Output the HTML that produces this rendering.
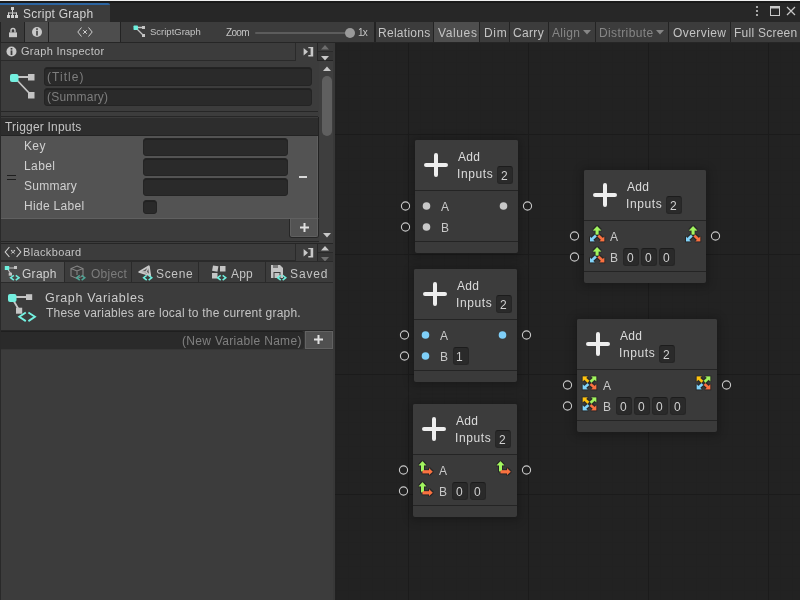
<!DOCTYPE html>
<html><head><meta charset="utf-8"><style>
html,body{margin:0;padding:0;width:800px;height:600px;overflow:hidden;background:#212121;font-family:"Liberation Sans", sans-serif;}
body>div,body>svg{position:absolute;}
.t{white-space:nowrap;will-change:transform;}
#canvas{background-color:#222222;
background-image:linear-gradient(to right,#1b1b1b 1px,transparent 1px),linear-gradient(to bottom,#1b1b1b 1px,transparent 1px),linear-gradient(to right,#212121 1px,transparent 1px),linear-gradient(to bottom,#212121 1px,transparent 1px);
background-size:120px 120px,120px 120px,12px 12px,12px 12px;
background-position:73px 0,0 91px,1px 0,0 7px;}
</style></head><body>
<div style="left:0px;top:0px;width:800px;height:22px;background:#272727;"></div>
<div style="left:0px;top:0px;width:800px;height:1px;background:#f0f0f0;"></div>
<div style="left:0px;top:1px;width:800px;height:2px;background:#1a1a1a;"></div>
<div style="left:0px;top:3px;width:110px;height:2px;background:#2c64a0;border-top-right-radius:2px;"></div>
<div style="left:0px;top:5px;width:110px;height:17px;background:#3c3c3c;"></div>
<svg style="position:absolute;left:7px;top:7px;" width="11" height="11" viewBox="0 0 11 11"><g fill="#d0d0d0"><rect x="4" y="0" width="3" height="3"/><rect x="5" y="3" width="1" height="2.5"/><rect x="1" y="5.5" width="9" height="1"/><rect x="1" y="5.5" width="1" height="2.5"/><rect x="9" y="5.5" width="1" height="2.5"/><rect x="5" y="5.5" width="1" height="2.5"/><rect x="0" y="8" width="3" height="3"/><rect x="4" y="8" width="3" height="3"/><rect x="8" y="8" width="3" height="3"/></g></svg>
<div class="t" style="left:23px;top:8.00px;font-size:12px;line-height:13.40px;color:#d2d2d2;letter-spacing:0.245px;">Script Graph</div>
<svg style="position:absolute;left:755px;top:5px;" width="4" height="12" viewBox="0 0 4 12"><g fill="#c8c8c8"><circle cx="2" cy="2" r="1.1"/><circle cx="2" cy="6" r="1.1"/><circle cx="2" cy="10" r="1.1"/></g></svg>
<svg style="position:absolute;left:769px;top:5px;" width="12" height="12" viewBox="0 0 12 12"><rect x="1.5" y="1.5" width="9" height="9" fill="none" stroke="#c8c8c8" stroke-width="1"/><rect x="1" y="1" width="10" height="2.5" fill="#c8c8c8"/></svg>
<svg style="position:absolute;left:786px;top:6px;" width="10" height="10" viewBox="0 0 10 10"><path d="M1 1 L9 9 M9 1 L1 9" stroke="#c8c8c8" stroke-width="1.2"/></svg>
<div style="left:0px;top:22px;width:800px;height:20px;background:#3c3c3c;"></div>
<div style="left:0px;top:42px;width:800px;height:1px;background:#262626;"></div>
<div style="left:0px;top:22px;width:1px;height:20px;background:#232323;"></div>
<div style="left:24px;top:22px;width:1px;height:20px;background:#232323;"></div>
<div style="left:25px;top:22px;width:23px;height:20px;background:#4d4d4d;"></div>
<div style="left:48px;top:22px;width:1px;height:20px;background:#232323;"></div>
<div style="left:49px;top:22px;width:71px;height:20px;background:#4d4d4d;"></div>
<div style="left:120px;top:22px;width:1px;height:20px;background:#232323;"></div>
<svg style="position:absolute;left:8px;top:26px;" width="10" height="12" viewBox="0 0 10 12"><path d="M3 6.5 V4.5 A2 2 0 0 1 7 4.5 V6.5" fill="none" stroke="#c8c8c8" stroke-width="1.4"/><rect x="1" y="6.4" width="8" height="4.8" fill="#c8c8c8"/></svg>
<svg style="position:absolute;left:31px;top:26px;" width="12" height="12" viewBox="0 0 12 12"><circle cx="6" cy="6" r="5" fill="#c8c8c8"/><rect x="5.1" y="2.3" width="1.8" height="1.6" fill="#4d4d4d"/><rect x="5.1" y="4.8" width="1.8" height="4.8" fill="#4d4d4d"/></svg>
<svg style="position:absolute;left:77px;top:27px;" width="16" height="10" viewBox="0 0 16 10"><path d="M4.5 0.5 L0.8 5 L4.5 9.5 M11.5 0.5 L15.2 5 L11.5 9.5 M6.2 3.2 L9.8 6.8 M9.8 3.2 L6.2 6.8" fill="none" stroke="#d0d0d0" stroke-width="1"/></svg>
<svg style="position:absolute;left:133px;top:25px;" width="13" height="13" viewBox="0 0 13 13"><path d="M2.5 2.5 L10.5 2.5 M2.5 2.5 L10.5 10.5" stroke="#c4c4c4" stroke-width="1.3"/><rect x="0.5" y="0.5" width="4.5" height="4.5" rx="0.8" fill="#6ef0de"/><rect x="9" y="1" width="3" height="3" fill="#c4c4c4"/><rect x="9" y="9" width="3" height="3" fill="#c4c4c4"/></svg>
<div class="t" style="left:150px;top:27.00px;font-size:9.5px;line-height:10.61px;color:#c4c4c4;">ScriptGraph</div>
<div class="t" style="left:226px;top:27.00px;font-size:10px;line-height:11.17px;color:#c4c4c4;letter-spacing:-0.667px;">Zoom</div>
<div style="left:255px;top:32px;width:95px;height:2px;background:#5c5c5c;border-radius:1px;"></div>
<div style="left:345px;top:28px;width:10px;height:10px;border-radius:50%;background:#9a9a9a;"></div>
<div class="t" style="left:358px;top:27.00px;font-size:10px;line-height:11.17px;color:#c4c4c4;letter-spacing:-0.750px;">1x</div>
<div style="left:374px;top:22px;width:2px;height:20px;background:#232323;"></div>
<div style="left:376px;top:22px;width:57px;height:20px;background:#3c3c3c;"></div>
<div style="left:433px;top:22px;width:1px;height:20px;background:#232323;"></div>
<div class="t" style="left:378px;top:27.00px;font-size:12px;line-height:13.40px;color:#c4c4c4;letter-spacing:0.275px;">Relations</div>
<div style="left:434px;top:22px;width:45px;height:20px;background:#4e4e4e;"></div>
<div style="left:479px;top:22px;width:1px;height:20px;background:#232323;"></div>
<div class="t" style="left:438px;top:27.00px;font-size:12px;line-height:13.40px;color:#c4c4c4;letter-spacing:0.620px;">Values</div>
<div style="left:480px;top:22px;width:29px;height:20px;background:#3c3c3c;"></div>
<div style="left:509px;top:22px;width:1px;height:20px;background:#232323;"></div>
<div class="t" style="left:484px;top:27.00px;font-size:12px;line-height:13.40px;color:#c4c4c4;letter-spacing:0.650px;">Dim</div>
<div style="left:510px;top:22px;width:38px;height:20px;background:#3c3c3c;"></div>
<div style="left:548px;top:22px;width:1px;height:20px;background:#232323;"></div>
<div class="t" style="left:513px;top:27.00px;font-size:12px;line-height:13.40px;color:#c4c4c4;letter-spacing:0.325px;">Carry</div>
<div style="left:549px;top:22px;width:46px;height:20px;background:#3c3c3c;"></div>
<div style="left:595px;top:22px;width:1px;height:20px;background:#232323;"></div>
<div class="t" style="left:552px;top:27.00px;font-size:12px;line-height:13.40px;color:#868686;letter-spacing:0.300px;">Align</div>
<div style="left:596px;top:22px;width:72px;height:20px;background:#3c3c3c;"></div>
<div style="left:668px;top:22px;width:1px;height:20px;background:#232323;"></div>
<div class="t" style="left:599px;top:27.00px;font-size:12px;line-height:13.40px;color:#868686;letter-spacing:0.389px;">Distribute</div>
<div style="left:669px;top:22px;width:61px;height:20px;background:#3c3c3c;"></div>
<div style="left:730px;top:22px;width:1px;height:20px;background:#232323;"></div>
<div class="t" style="left:673px;top:27.00px;font-size:12px;line-height:13.40px;color:#c4c4c4;letter-spacing:0.429px;">Overview</div>
<div style="left:731px;top:22px;width:69px;height:20px;background:#3c3c3c;"></div>
<div style="left:800px;top:22px;width:1px;height:20px;background:#232323;"></div>
<div class="t" style="left:734px;top:27.00px;font-size:12px;line-height:13.40px;color:#c4c4c4;letter-spacing:0.250px;">Full Screen</div>
<svg style="position:absolute;left:583px;top:30px;" width="8" height="5" viewBox="0 0 8 5"><path d="M0 0 H8 L4 4.5 Z" fill="#868686"/></svg>
<svg style="position:absolute;left:656px;top:30px;" width="8" height="5" viewBox="0 0 8 5"><path d="M0 0 H8 L4 4.5 Z" fill="#868686"/></svg>
<div id="canvas" style="left:335px;top:43px;width:465px;height:557px;"></div>
<div style="left:0px;top:43px;width:335px;height:557px;background:#3c3c3c;"></div>
<div style="left:0px;top:43px;width:1px;height:557px;background:#292929;"></div>
<div style="left:1px;top:43px;width:294px;height:17px;background:#3c3c3c;"></div>
<div style="left:295px;top:43px;width:1px;height:18px;background:#2a2a2a;"></div>
<div style="left:1px;top:60px;width:295px;height:1px;background:#2a2a2a;"></div>
<svg style="position:absolute;left:6px;top:46px;" width="11" height="11" viewBox="0 0 11 11"><circle cx="5.5" cy="5.5" r="5" fill="#c8c8c8"/><rect x="4.6" y="2" width="1.8" height="1.6" fill="#3c3c3c"/><rect x="4.6" y="4.4" width="1.8" height="4.6" fill="#3c3c3c"/></svg>
<div class="t" style="left:21px;top:45.00px;font-size:11px;line-height:12.29px;color:#c4c4c4;letter-spacing:0.300px;">Graph Inspector</div>
<svg style="position:absolute;left:302.5px;top:47px;" width="11" height="10" viewBox="0 0 11 10"><path d="M0.6 1 L5 4.8 L0.6 8.6 Z" fill="#c8c8c8"/><path d="M5.3 0 H10.2 V9.4 H5.3 V8.1 H7.6 V1.3 H5.3 Z" fill="#c8c8c8"/></svg>
<div style="left:317px;top:43px;width:16px;height:18px;background:#353535;border-left:1px solid #262626;border-bottom:1px solid #242424;box-sizing:border-box;"></div>
<div style="left:318px;top:43px;width:15px;height:8px;background:#393939;"></div>
<div style="left:318px;top:51px;width:15px;height:1px;background:#2a2a2a;"></div>
<svg style="position:absolute;left:321px;top:44.6px;" width="8" height="5" viewBox="0 0 8 5"><path d="M0 4.4 L4 0 L8 4.4 Z" fill="#6e6e6e"/></svg>
<svg style="position:absolute;left:321px;top:55.6px;" width="8" height="5" viewBox="0 0 8 5"><path d="M0 0 H8 L4 4.4 Z" fill="#c8c8c8"/></svg>
<svg style="position:absolute;left:10px;top:73px;" width="26" height="26" viewBox="0 0 26 26"><path d="M4 4 H21 M4 4 L21 22" stroke="#c4c4c4" stroke-width="1.8"/><rect x="0" y="1" width="8.5" height="8" rx="2" fill="#74f0e0"/><rect x="18" y="1" width="6.5" height="6.5" fill="#c4c4c4"/><rect x="18" y="19" width="6.5" height="6.5" fill="#c4c4c4"/></svg>
<div style="left:44px;top:67px;width:268px;height:19px;background:#2a2a2a;border-radius:3px;box-shadow:inset 0 1px 0 #212121;border:1px solid #242424;box-sizing:border-box;"></div>
<div style="left:44px;top:88px;width:268px;height:18px;background:#2a2a2a;border-radius:3px;box-shadow:inset 0 1px 0 #212121;border:1px solid #242424;box-sizing:border-box;"></div>
<div class="t" style="left:47px;top:71.00px;font-size:12px;line-height:13.40px;color:#7d7d7d;letter-spacing:1.058px;">(Title)</div>
<div class="t" style="left:47px;top:91.00px;font-size:12px;line-height:13.40px;color:#7d7d7d;letter-spacing:0.219px;">(Summary)</div>
<div style="left:1px;top:111px;width:317px;height:1px;background:#262626;"></div>
<div style="left:1px;top:116px;width:317px;height:1px;background:#262626;"></div>
<div style="left:1px;top:117px;width:317px;height:19px;background:#2d2d2d;"></div>
<div style="left:1px;top:117px;width:317px;height:1px;background:#3b3b3b;"></div>
<div style="left:1px;top:135px;width:317px;height:1px;background:#232323;"></div>
<div class="t" style="left:5px;top:121.00px;font-size:12px;line-height:13.40px;color:#c4c4c4;letter-spacing:0.200px;">Trigger Inputs</div>
<div style="left:1px;top:136px;width:317px;height:82px;background:#535353;"></div>
<div style="left:1px;top:218px;width:317px;height:1px;background:#606060;"></div>
<div style="left:318px;top:117px;width:1px;height:101px;background:#222222;"></div>
<div style="left:317px;top:136px;width:1px;height:82px;background:#5f5f5f;"></div>
<div style="left:7px;top:175px;width:9px;height:1px;background:#1e1e1e;"></div>
<div style="left:7px;top:179px;width:9px;height:1px;background:#1e1e1e;"></div>
<div class="t" style="left:24px;top:140.00px;font-size:12px;line-height:13.40px;color:#d0d0d0;letter-spacing:0.350px;">Key</div>
<div class="t" style="left:24px;top:160.00px;font-size:12px;line-height:13.40px;color:#d0d0d0;letter-spacing:0.400px;">Label</div>
<div class="t" style="left:24px;top:180.00px;font-size:12px;line-height:13.40px;color:#d0d0d0;letter-spacing:0.250px;">Summary</div>
<div class="t" style="left:24px;top:200.00px;font-size:12px;line-height:13.40px;color:#d0d0d0;letter-spacing:0.300px;">Hide Label</div>
<div style="left:143px;top:138px;width:145px;height:18px;background:#2a2a2a;border-radius:3px;box-shadow:inset 0 1px 0 #212121;border:1px solid #242424;box-sizing:border-box;"></div>
<div style="left:143px;top:158px;width:145px;height:18px;background:#2a2a2a;border-radius:3px;box-shadow:inset 0 1px 0 #212121;border:1px solid #242424;box-sizing:border-box;"></div>
<div style="left:143px;top:178px;width:145px;height:18px;background:#2a2a2a;border-radius:3px;box-shadow:inset 0 1px 0 #212121;border:1px solid #242424;box-sizing:border-box;"></div>
<div style="left:143px;top:200px;width:14px;height:14px;background:#2a2a2a;border-radius:3px;box-shadow:inset 0 1px 0 #212121;border:1px solid #242424;box-sizing:border-box;"></div>
<div style="left:299px;top:176px;width:8px;height:2px;background:#d8d8d8;"></div>
<div style="left:289px;top:219px;width:30px;height:19px;background:#262626;border-radius:0 0 3px 3px;"></div>
<div style="left:290px;top:219px;width:28px;height:18px;background:#535353;border:1px solid #606060;border-top:none;box-sizing:border-box;border-radius:0 0 2px 2px;"></div>
<svg style="position:absolute;left:298px;top:221px;" width="13" height="13" viewBox="0 0 13 13"><path d="M6.5 2 V11 M2 6.5 H11" stroke="#e0e0e0" stroke-width="2"/></svg>
<div style="left:319px;top:61px;width:15px;height:182px;background:#3e3e3e;"></div>
<svg style="position:absolute;left:323px;top:66px;" width="8" height="5" viewBox="0 0 8 5"><path d="M0 5 L4 0.5 L8 5 Z" fill="#c8c8c8"/></svg>
<div style="left:322px;top:76px;width:10px;height:60px;border-radius:5px;background:#5f5f5f;"></div>
<svg style="position:absolute;left:323px;top:233px;" width="8" height="5" viewBox="0 0 8 5"><path d="M0 0 H8 L4 4.5 Z" fill="#c8c8c8"/></svg>
<div style="left:1px;top:241px;width:318px;height:1px;background:#262626;"></div>
<div style="left:1px;top:243px;width:318px;height:1px;background:#262626;"></div>
<div style="left:295px;top:244px;width:1px;height:17px;background:#2a2a2a;"></div>
<div style="left:1px;top:260px;width:295px;height:1px;background:#2a2a2a;"></div>
<svg style="position:absolute;left:4px;top:246px;" width="19" height="12" viewBox="0 0 19 12"><path d="M5.4 1 L1.2 6 L5.4 11 M12.6 1 L16.8 6 L12.6 11" fill="none" stroke="#d0d0d0" stroke-width="1.1"/><path d="M7.2 4.2 L10.8 7.8 M10.8 4.2 L7.2 7.8" fill="none" stroke="#d0d0d0" stroke-width="1.3" stroke-dasharray="1.4 0.9"/></svg>
<div class="t" style="left:23px;top:246.00px;font-size:11px;line-height:12.29px;color:#c4c4c4;letter-spacing:0.356px;">Blackboard</div>
<svg style="position:absolute;left:302.5px;top:248px;" width="11" height="10" viewBox="0 0 11 10"><path d="M0.6 1 L5 4.8 L0.6 8.6 Z" fill="#c8c8c8"/><path d="M5.3 0 H10.2 V9.4 H5.3 V8.1 H7.6 V1.3 H5.3 Z" fill="#c8c8c8"/></svg>
<div style="left:317px;top:243px;width:17px;height:1px;background:#262626;"></div>
<div style="left:317px;top:244px;width:16px;height:18px;background:#353535;border-left:1px solid #262626;border-bottom:1px solid #242424;box-sizing:border-box;"></div>
<div style="left:318px;top:244px;width:15px;height:8px;background:#393939;"></div>
<div style="left:318px;top:252px;width:15px;height:1px;background:#2a2a2a;"></div>
<svg style="position:absolute;left:321px;top:245.8px;" width="8" height="5" viewBox="0 0 8 5"><path d="M0 4.4 L4 0 L8 4.4 Z" fill="#c8c8c8"/></svg>
<svg style="position:absolute;left:321px;top:256.8px;" width="8" height="5" viewBox="0 0 8 5"><path d="M0 0 H8 L4 4.4 Z" fill="#6e6e6e"/></svg>
<div style="left:1px;top:261px;width:334px;height:1px;background:#2a2a2a;"></div>
<div style="left:1px;top:262px;width:334px;height:20px;background:#3c3c3c;"></div>
<div style="left:1px;top:282px;width:334px;height:1px;background:#2a2a2a;"></div>
<div style="left:1px;top:262px;width:63px;height:20px;background:#4b4b4b;"></div>
<div style="left:64px;top:262px;width:1px;height:20px;background:#2a2a2a;"></div>
<div style="left:131px;top:262px;width:1px;height:20px;background:#2a2a2a;"></div>
<div style="left:198px;top:262px;width:1px;height:20px;background:#2a2a2a;"></div>
<div style="left:265px;top:262px;width:1px;height:20px;background:#2a2a2a;"></div>
<div class="t" style="left:22px;top:268.00px;font-size:12px;line-height:13.40px;color:#d0d0d0;letter-spacing:0.275px;">Graph</div>
<div class="t" style="left:91px;top:268.00px;font-size:12px;line-height:13.40px;color:#7c7c7c;letter-spacing:0.240px;">Object</div>
<div class="t" style="left:156px;top:268.00px;font-size:12px;line-height:13.40px;color:#c4c4c4;letter-spacing:0.675px;">Scene</div>
<div class="t" style="left:231px;top:268.00px;font-size:12px;line-height:13.40px;color:#c4c4c4;letter-spacing:0.150px;">App</div>
<div class="t" style="left:290px;top:268.00px;font-size:12px;line-height:13.40px;color:#c4c4c4;letter-spacing:0.875px;">Saved</div>
<svg style="position:absolute;left:4px;top:265px;" width="16" height="12" viewBox="0 0 16 12"><path d="M3 3 H12 M3 3 L7 9" stroke="#c4c4c4" stroke-width="1.2"/><rect x="0.8" y="1" width="4.4" height="4" fill="#6ef0de"/><rect x="10" y="1" width="3" height="3" fill="#c4c4c4"/><rect x="4.7" y="7.7" width="3.3" height="3" fill="#c4c4c4"/></svg>
<svg style="position:absolute;left:8.7px;top:273.8px;" width="11.6" height="7.4" viewBox="0 0 11.6 7.4"><g transform="translate(1,1)"><path d="M3.84 0.3 L0.6 2.7 L3.84 5.1000000000000005 M5.76 0.3 L9.0 2.7 L5.76 5.1000000000000005" fill="none" stroke="#6ef0de" stroke-width="1.5"/></g></svg>
<svg style="position:absolute;left:70px;top:265px;" width="16" height="15" viewBox="0 0 16 15"><path d="M7 1 L13 3.5 V11 L7 13.5 L1 11 V3.5 Z M1 3.5 L7 6 L13 3.5 M7 6 V10" fill="none" stroke="#858585" stroke-width="1.1"/></svg>
<svg style="position:absolute;left:75px;top:273.8px;" width="11.4" height="7.4" viewBox="0 0 11.4 7.4"><g transform="translate(1,1)"><path d="M3.7600000000000002 0.3 L0.6 2.7 L3.7600000000000002 5.1000000000000005 M5.640000000000001 0.3 L8.8 2.7 L5.640000000000001 5.1000000000000005" fill="none" stroke="#4fa596" stroke-width="1.5"/></g></svg>
<svg style="position:absolute;left:138px;top:265px;" width="14" height="13" viewBox="0 0 14 13"><path d="M1.2 7 L10.8 1.2 L12.2 10.5 Z" fill="#5a5a5a" stroke="#c8c8c8" stroke-width="1.8" stroke-linejoin="round"/><path d="M1.5 7 H8 M8 7 L10.8 1.5 M8 7 L11.8 10.2" stroke="#c8c8c8" stroke-width="1.3"/></svg>
<svg style="position:absolute;left:142.3px;top:274px;" width="11.4" height="7.4" viewBox="0 0 11.4 7.4"><g transform="translate(1,1)"><path d="M3.7600000000000002 0.3 L0.6 2.7 L3.7600000000000002 5.1000000000000005 M5.640000000000001 0.3 L8.8 2.7 L5.640000000000001 5.1000000000000005" fill="none" stroke="#6ef0de" stroke-width="1.5"/></g></svg>
<svg style="position:absolute;left:212px;top:265px;" width="14" height="14" viewBox="0 0 14 14"><rect x="0.5" y="0.8" width="5.5" height="5.5" transform="rotate(10 3 3.5)" fill="#c4c4c4"/><rect x="8" y="1" width="5.5" height="5.5" fill="#c4c4c4"/><rect x="0" y="8" width="5.5" height="5.5" fill="#c4c4c4"/></svg>
<svg style="position:absolute;left:215.8px;top:273.8px;" width="11.4" height="7.4" viewBox="0 0 11.4 7.4"><g transform="translate(1,1)"><path d="M3.7600000000000002 0.3 L0.6 2.7 L3.7600000000000002 5.1000000000000005 M5.640000000000001 0.3 L8.8 2.7 L5.640000000000001 5.1000000000000005" fill="none" stroke="#6ef0de" stroke-width="1.5"/></g></svg>
<svg style="position:absolute;left:271px;top:265px;" width="13" height="14" viewBox="0 0 13 14"><path d="M0 0 H9 L12 3 V13 H0 Z" fill="#c4c4c4"/><rect x="2" y="0" width="5" height="3" fill="#7a7a7a"/><rect x="2.5" y="7" width="7" height="6" fill="#3c3c3c"/><rect x="3.5" y="8" width="5" height="5" fill="#c4c4c4"/></svg>
<svg style="position:absolute;left:275.8px;top:273.8px;" width="11.4" height="7.4" viewBox="0 0 11.4 7.4"><g transform="translate(1,1)"><path d="M3.7600000000000002 0.3 L0.6 2.7 L3.7600000000000002 5.1000000000000005 M5.640000000000001 0.3 L8.8 2.7 L5.640000000000001 5.1000000000000005" fill="none" stroke="#6ef0de" stroke-width="1.5"/></g></svg>
<svg style="position:absolute;left:7px;top:293px;overflow:visible" width="30" height="30" viewBox="0 0 30 30"><path d="M5 4 H22 M5 5 L12 17" stroke="#c4c4c4" stroke-width="1.8"/><rect x="1" y="1" width="8.5" height="8" rx="2" fill="#74f0e0"/><rect x="19" y="1.2" width="6.2" height="5.8" fill="#c4c4c4"/><rect x="9" y="14.7" width="6.2" height="6" fill="#c4c4c4"/><path d="M18.8 19.5 L12.3 23.8 L18.8 28.1 M21.4 19.5 L27.9 23.8 L21.4 28.1" fill="none" stroke="#74f2e2" stroke-width="1.9"/></svg>
<div class="t" style="left:45px;top:292.00px;font-size:12.5px;line-height:13.96px;color:#cccccc;letter-spacing:0.671px;">Graph Variables</div>
<div class="t" style="left:46px;top:307.00px;font-size:12px;line-height:13.40px;color:#c4c4c4;letter-spacing:0.215px;">These variables are local to the current graph.</div>
<div style="left:1px;top:330px;width:334px;height:1px;background:#262626;"></div>
<div style="left:1px;top:331px;width:334px;height:19px;background:#363636;"></div>
<div style="left:1px;top:331px;width:303px;height:18px;background:#2a2a2a;border-radius:0 3px 3px 0;border-top:1px solid #1f1f1f;box-sizing:border-box;"></div>
<div class="t" style="left:182px;top:335.00px;font-size:12px;line-height:13.40px;color:#808080;letter-spacing:0.311px;">(New Variable Name)</div>
<div style="left:305px;top:331px;width:28px;height:18px;background:#505050;border:1px solid #626262;box-sizing:border-box;"></div>
<svg style="position:absolute;left:312px;top:333px;" width="13" height="13" viewBox="0 0 13 13"><path d="M6.5 2 V11 M2 6.5 H11" stroke="#e0e0e0" stroke-width="2"/></svg>
<div style="left:333px;top:43px;width:2px;height:557px;background:#383838;"></div>
<div style="left:415px;top:140px;width:103px;height:113px;background:#3a3a3a;border-radius:2px;box-shadow:0 1px 9px 3px rgba(0,0,0,0.22);"></div>
<div style="left:415px;top:140px;width:103px;height:50px;background:#3c3c3c;border-radius:2px 2px 0 0;"></div>
<div style="left:415px;top:190px;width:103px;height:1px;background:#242424;"></div>
<div style="left:415px;top:241px;width:103px;height:1px;background:#242424;"></div>
<svg style="position:absolute;left:424px;top:153px;" width="24" height="24" viewBox="0 0 24 24"><path d="M12 2 V22 M2 12 H22" stroke="#eeeeee" stroke-width="4" stroke-linecap="round"/></svg>
<div class="t" style="left:458px;top:151.00px;font-size:12px;line-height:13.40px;color:#dcdcdc;letter-spacing:0.300px;">Add</div>
<div class="t" style="left:457px;top:168.00px;font-size:12px;line-height:13.40px;color:#dcdcdc;letter-spacing:0.590px;">Inputs</div>
<div style="left:497px;top:166px;width:15.5px;height:17.5px;background:#2a2a2a;border-radius:3px;border:1px solid #262626;border-top-color:#1c1c1c;box-sizing:border-box;"></div>
<div class="t" style="left:501px;top:170.00px;font-size:12px;line-height:13.40px;color:#d0d0d0;">2</div>
<svg style="position:absolute;left:399px;top:200px;" width="12" height="12" viewBox="0 0 12 12"><circle cx="6.5" cy="6" r="4.1" fill="none" stroke="#c8c8c8" stroke-width="1.1"/></svg>
<svg style="position:absolute;left:399px;top:221px;" width="12" height="12" viewBox="0 0 12 12"><circle cx="6.5" cy="6" r="4.1" fill="none" stroke="#c8c8c8" stroke-width="1.1"/></svg>
<svg style="position:absolute;left:521px;top:200px;" width="12" height="12" viewBox="0 0 12 12"><circle cx="6.5" cy="6" r="4.1" fill="none" stroke="#c8c8c8" stroke-width="1.1"/></svg>
<svg style="position:absolute;left:421px;top:201px;" width="10" height="10" viewBox="0 0 10 10"><circle cx="5.5" cy="5" r="3.8" fill="#c8c8c8"/></svg>
<svg style="position:absolute;left:421px;top:222px;" width="10" height="10" viewBox="0 0 10 10"><circle cx="5.5" cy="5" r="3.8" fill="#c8c8c8"/></svg>
<svg style="position:absolute;left:498px;top:201px;" width="10" height="10" viewBox="0 0 10 10"><circle cx="5.5" cy="5" r="3.8" fill="#c8c8c8"/></svg>
<div class="t" style="left:441px;top:201.00px;font-size:12px;line-height:13.40px;color:#c8c8c8;">A</div>
<div class="t" style="left:441px;top:222.00px;font-size:12px;line-height:13.40px;color:#c8c8c8;">B</div>
<div style="left:584px;top:170px;width:122px;height:113px;background:#3a3a3a;border-radius:2px;box-shadow:0 1px 9px 3px rgba(0,0,0,0.22);"></div>
<div style="left:584px;top:170px;width:122px;height:50px;background:#3c3c3c;border-radius:2px 2px 0 0;"></div>
<div style="left:584px;top:220px;width:122px;height:1px;background:#242424;"></div>
<div style="left:584px;top:271px;width:122px;height:1px;background:#242424;"></div>
<svg style="position:absolute;left:593px;top:183px;" width="24" height="24" viewBox="0 0 24 24"><path d="M12 2 V22 M2 12 H22" stroke="#eeeeee" stroke-width="4" stroke-linecap="round"/></svg>
<div class="t" style="left:627px;top:181.00px;font-size:12px;line-height:13.40px;color:#dcdcdc;letter-spacing:0.300px;">Add</div>
<div class="t" style="left:626px;top:198.00px;font-size:12px;line-height:13.40px;color:#dcdcdc;letter-spacing:0.590px;">Inputs</div>
<div style="left:666px;top:196px;width:15.5px;height:17.5px;background:#2a2a2a;border-radius:3px;border:1px solid #262626;border-top-color:#1c1c1c;box-sizing:border-box;"></div>
<div class="t" style="left:670px;top:200.00px;font-size:12px;line-height:13.40px;color:#d0d0d0;">2</div>
<svg style="position:absolute;left:568px;top:230px;" width="12" height="12" viewBox="0 0 12 12"><circle cx="6.5" cy="6" r="4.1" fill="none" stroke="#c8c8c8" stroke-width="1.1"/></svg>
<svg style="position:absolute;left:568px;top:251px;" width="12" height="12" viewBox="0 0 12 12"><circle cx="6.5" cy="6" r="4.1" fill="none" stroke="#c8c8c8" stroke-width="1.1"/></svg>
<svg style="position:absolute;left:709px;top:230px;" width="12" height="12" viewBox="0 0 12 12"><circle cx="6.5" cy="6" r="4.1" fill="none" stroke="#c8c8c8" stroke-width="1.1"/></svg>
<svg style="position:absolute;left:589px;top:225.5px;overflow:visible" width="17" height="17" viewBox="0 0 17 17"><defs><filter id="f" x="-20%" y="-20%" width="140%" height="140%"><feMorphology operator="dilate" radius="0.6" in="SourceAlpha" result="d"/><feFlood flood-color="#1a1a1a" flood-opacity="0.55"/><feComposite in2="d" operator="in" result="s"/><feMerge><feMergeNode in="s"/><feMergeNode in="SourceGraphic"/></feMerge></filter></defs><g filter="url(#f)"><path d="M8.1 0.3 L12.2 4.5 H9.5 V8.5 H6.699999999999999 V4.5 H4.0 Z" fill="#a2f55f"/><path d="M1.0 15.3 L5.6 15.3 L1.0 10.700000000000001 Z" fill="#82d4fa"/><path d="M2.61 13.690000000000001 L6.8 9.6" stroke="#82d4fa" stroke-width="2.5"/><path d="M15.2 15.3 L10.6 15.3 L15.2 10.700000000000001 Z" fill="#fa7240"/><path d="M13.59 13.690000000000001 L9.4 9.6" stroke="#fa7240" stroke-width="2.5"/></g></svg>
<svg style="position:absolute;left:589px;top:246.5px;overflow:visible" width="17" height="17" viewBox="0 0 17 17"><defs><filter id="f" x="-20%" y="-20%" width="140%" height="140%"><feMorphology operator="dilate" radius="0.6" in="SourceAlpha" result="d"/><feFlood flood-color="#1a1a1a" flood-opacity="0.55"/><feComposite in2="d" operator="in" result="s"/><feMerge><feMergeNode in="s"/><feMergeNode in="SourceGraphic"/></feMerge></filter></defs><g filter="url(#f)"><path d="M8.1 0.3 L12.2 4.5 H9.5 V8.5 H6.699999999999999 V4.5 H4.0 Z" fill="#a2f55f"/><path d="M1.0 15.3 L5.6 15.3 L1.0 10.700000000000001 Z" fill="#82d4fa"/><path d="M2.61 13.690000000000001 L6.8 9.6" stroke="#82d4fa" stroke-width="2.5"/><path d="M15.2 15.3 L10.6 15.3 L15.2 10.700000000000001 Z" fill="#fa7240"/><path d="M13.59 13.690000000000001 L9.4 9.6" stroke="#fa7240" stroke-width="2.5"/></g></svg>
<svg style="position:absolute;left:685px;top:225.5px;overflow:visible" width="17" height="17" viewBox="0 0 17 17"><defs><filter id="f" x="-20%" y="-20%" width="140%" height="140%"><feMorphology operator="dilate" radius="0.6" in="SourceAlpha" result="d"/><feFlood flood-color="#1a1a1a" flood-opacity="0.55"/><feComposite in2="d" operator="in" result="s"/><feMerge><feMergeNode in="s"/><feMergeNode in="SourceGraphic"/></feMerge></filter></defs><g filter="url(#f)"><path d="M8.1 0.3 L12.2 4.5 H9.5 V8.5 H6.699999999999999 V4.5 H4.0 Z" fill="#a2f55f"/><path d="M1.0 15.3 L5.6 15.3 L1.0 10.700000000000001 Z" fill="#82d4fa"/><path d="M2.61 13.690000000000001 L6.8 9.6" stroke="#82d4fa" stroke-width="2.5"/><path d="M15.2 15.3 L10.6 15.3 L15.2 10.700000000000001 Z" fill="#fa7240"/><path d="M13.59 13.690000000000001 L9.4 9.6" stroke="#fa7240" stroke-width="2.5"/></g></svg>
<div class="t" style="left:610px;top:231.00px;font-size:12px;line-height:13.40px;color:#c8c8c8;">A</div>
<div class="t" style="left:610px;top:252.00px;font-size:12px;line-height:13.40px;color:#c8c8c8;">B</div>
<div style="left:623px;top:248px;width:15.5px;height:17.6px;background:#2a2a2a;border-radius:3px;border:1px solid #262626;border-top-color:#1c1c1c;box-sizing:border-box;"></div>
<div class="t" style="left:627px;top:252.00px;font-size:12px;line-height:13.40px;color:#d0d0d0;">0</div>
<div style="left:641px;top:248px;width:15.5px;height:17.6px;background:#2a2a2a;border-radius:3px;border:1px solid #262626;border-top-color:#1c1c1c;box-sizing:border-box;"></div>
<div class="t" style="left:645px;top:252.00px;font-size:12px;line-height:13.40px;color:#d0d0d0;">0</div>
<div style="left:659px;top:248px;width:15.5px;height:17.6px;background:#2a2a2a;border-radius:3px;border:1px solid #262626;border-top-color:#1c1c1c;box-sizing:border-box;"></div>
<div class="t" style="left:663px;top:252.00px;font-size:12px;line-height:13.40px;color:#d0d0d0;">0</div>
<div style="left:414px;top:269px;width:103px;height:113px;background:#3a3a3a;border-radius:2px;box-shadow:0 1px 9px 3px rgba(0,0,0,0.22);"></div>
<div style="left:414px;top:269px;width:103px;height:50px;background:#3c3c3c;border-radius:2px 2px 0 0;"></div>
<div style="left:414px;top:319px;width:103px;height:1px;background:#242424;"></div>
<div style="left:414px;top:370px;width:103px;height:1px;background:#242424;"></div>
<svg style="position:absolute;left:423px;top:282px;" width="24" height="24" viewBox="0 0 24 24"><path d="M12 2 V22 M2 12 H22" stroke="#eeeeee" stroke-width="4" stroke-linecap="round"/></svg>
<div class="t" style="left:457px;top:280.00px;font-size:12px;line-height:13.40px;color:#dcdcdc;letter-spacing:0.300px;">Add</div>
<div class="t" style="left:456px;top:297.00px;font-size:12px;line-height:13.40px;color:#dcdcdc;letter-spacing:0.590px;">Inputs</div>
<div style="left:496px;top:295px;width:15.5px;height:17.5px;background:#2a2a2a;border-radius:3px;border:1px solid #262626;border-top-color:#1c1c1c;box-sizing:border-box;"></div>
<div class="t" style="left:500px;top:299.00px;font-size:12px;line-height:13.40px;color:#d0d0d0;">2</div>
<svg style="position:absolute;left:398px;top:329px;" width="12" height="12" viewBox="0 0 12 12"><circle cx="6.5" cy="6" r="4.1" fill="none" stroke="#c8c8c8" stroke-width="1.1"/></svg>
<svg style="position:absolute;left:398px;top:350px;" width="12" height="12" viewBox="0 0 12 12"><circle cx="6.5" cy="6" r="4.1" fill="none" stroke="#c8c8c8" stroke-width="1.1"/></svg>
<svg style="position:absolute;left:520px;top:329px;" width="12" height="12" viewBox="0 0 12 12"><circle cx="6.5" cy="6" r="4.1" fill="none" stroke="#c8c8c8" stroke-width="1.1"/></svg>
<svg style="position:absolute;left:420px;top:330px;" width="10" height="10" viewBox="0 0 10 10"><circle cx="5.5" cy="5" r="3.8" fill="#7fcff8"/></svg>
<svg style="position:absolute;left:420px;top:351px;" width="10" height="10" viewBox="0 0 10 10"><circle cx="5.5" cy="5" r="3.8" fill="#7fcff8"/></svg>
<svg style="position:absolute;left:497px;top:330px;" width="10" height="10" viewBox="0 0 10 10"><circle cx="5.5" cy="5" r="3.8" fill="#7fcff8"/></svg>
<div class="t" style="left:440px;top:330.00px;font-size:12px;line-height:13.40px;color:#c8c8c8;">A</div>
<div class="t" style="left:440px;top:351.00px;font-size:12px;line-height:13.40px;color:#c8c8c8;">B</div>
<div style="left:453px;top:347px;width:15.5px;height:17.6px;background:#2a2a2a;border-radius:3px;border:1px solid #262626;border-top-color:#1c1c1c;box-sizing:border-box;"></div>
<div class="t" style="left:456px;top:351.00px;font-size:12px;line-height:13.40px;color:#d0d0d0;">1</div>
<div style="left:577px;top:319px;width:140px;height:113px;background:#3a3a3a;border-radius:2px;box-shadow:0 1px 9px 3px rgba(0,0,0,0.22);"></div>
<div style="left:577px;top:319px;width:140px;height:50px;background:#3c3c3c;border-radius:2px 2px 0 0;"></div>
<div style="left:577px;top:369px;width:140px;height:1px;background:#242424;"></div>
<div style="left:577px;top:420px;width:140px;height:1px;background:#242424;"></div>
<svg style="position:absolute;left:586px;top:332px;" width="24" height="24" viewBox="0 0 24 24"><path d="M12 2 V22 M2 12 H22" stroke="#eeeeee" stroke-width="4" stroke-linecap="round"/></svg>
<div class="t" style="left:620px;top:330.00px;font-size:12px;line-height:13.40px;color:#dcdcdc;letter-spacing:0.300px;">Add</div>
<div class="t" style="left:619px;top:347.00px;font-size:12px;line-height:13.40px;color:#dcdcdc;letter-spacing:0.590px;">Inputs</div>
<div style="left:659px;top:345px;width:15.5px;height:17.5px;background:#2a2a2a;border-radius:3px;border:1px solid #262626;border-top-color:#1c1c1c;box-sizing:border-box;"></div>
<div class="t" style="left:663px;top:349.00px;font-size:12px;line-height:13.40px;color:#d0d0d0;">2</div>
<svg style="position:absolute;left:561px;top:379px;" width="12" height="12" viewBox="0 0 12 12"><circle cx="6.5" cy="6" r="4.1" fill="none" stroke="#c8c8c8" stroke-width="1.1"/></svg>
<svg style="position:absolute;left:561px;top:400px;" width="12" height="12" viewBox="0 0 12 12"><circle cx="6.5" cy="6" r="4.1" fill="none" stroke="#c8c8c8" stroke-width="1.1"/></svg>
<svg style="position:absolute;left:720px;top:379px;" width="12" height="12" viewBox="0 0 12 12"><circle cx="6.5" cy="6" r="4.1" fill="none" stroke="#c8c8c8" stroke-width="1.1"/></svg>
<svg style="position:absolute;left:582px;top:374.5px;overflow:visible" width="17" height="17" viewBox="0 0 17 17"><defs><filter id="f" x="-20%" y="-20%" width="140%" height="140%"><feMorphology operator="dilate" radius="0.6" in="SourceAlpha" result="d"/><feFlood flood-color="#1a1a1a" flood-opacity="0.55"/><feComposite in2="d" operator="in" result="s"/><feMerge><feMergeNode in="s"/><feMergeNode in="SourceGraphic"/></feMerge></filter></defs><g filter="url(#f)"><path d="M0.8 1.5 L5.6 1.5 L0.8 6.3 Z" fill="#ffc30f"/><path d="M2.48 3.1799999999999997 L6.4 6.7" stroke="#ffc30f" stroke-width="2.5"/><path d="M14.2 1.5 L9.399999999999999 1.5 L14.2 6.3 Z" fill="#a2f55f"/><path d="M12.52 3.1799999999999997 L8.6 6.7" stroke="#a2f55f" stroke-width="2.5"/><path d="M0.8 14.3 L5.6 14.3 L0.8 9.5 Z" fill="#82d4fa"/><path d="M2.48 12.620000000000001 L6.4 9.1" stroke="#82d4fa" stroke-width="2.5"/><path d="M14.2 14.3 L9.399999999999999 14.3 L14.2 9.5 Z" fill="#fa7240"/><path d="M12.52 12.620000000000001 L8.6 9.1" stroke="#fa7240" stroke-width="2.5"/></g></svg>
<svg style="position:absolute;left:582px;top:395.5px;overflow:visible" width="17" height="17" viewBox="0 0 17 17"><defs><filter id="f" x="-20%" y="-20%" width="140%" height="140%"><feMorphology operator="dilate" radius="0.6" in="SourceAlpha" result="d"/><feFlood flood-color="#1a1a1a" flood-opacity="0.55"/><feComposite in2="d" operator="in" result="s"/><feMerge><feMergeNode in="s"/><feMergeNode in="SourceGraphic"/></feMerge></filter></defs><g filter="url(#f)"><path d="M0.8 1.5 L5.6 1.5 L0.8 6.3 Z" fill="#ffc30f"/><path d="M2.48 3.1799999999999997 L6.4 6.7" stroke="#ffc30f" stroke-width="2.5"/><path d="M14.2 1.5 L9.399999999999999 1.5 L14.2 6.3 Z" fill="#a2f55f"/><path d="M12.52 3.1799999999999997 L8.6 6.7" stroke="#a2f55f" stroke-width="2.5"/><path d="M0.8 14.3 L5.6 14.3 L0.8 9.5 Z" fill="#82d4fa"/><path d="M2.48 12.620000000000001 L6.4 9.1" stroke="#82d4fa" stroke-width="2.5"/><path d="M14.2 14.3 L9.399999999999999 14.3 L14.2 9.5 Z" fill="#fa7240"/><path d="M12.52 12.620000000000001 L8.6 9.1" stroke="#fa7240" stroke-width="2.5"/></g></svg>
<svg style="position:absolute;left:696px;top:374.5px;overflow:visible" width="17" height="17" viewBox="0 0 17 17"><defs><filter id="f" x="-20%" y="-20%" width="140%" height="140%"><feMorphology operator="dilate" radius="0.6" in="SourceAlpha" result="d"/><feFlood flood-color="#1a1a1a" flood-opacity="0.55"/><feComposite in2="d" operator="in" result="s"/><feMerge><feMergeNode in="s"/><feMergeNode in="SourceGraphic"/></feMerge></filter></defs><g filter="url(#f)"><path d="M0.8 1.5 L5.6 1.5 L0.8 6.3 Z" fill="#ffc30f"/><path d="M2.48 3.1799999999999997 L6.4 6.7" stroke="#ffc30f" stroke-width="2.5"/><path d="M14.2 1.5 L9.399999999999999 1.5 L14.2 6.3 Z" fill="#a2f55f"/><path d="M12.52 3.1799999999999997 L8.6 6.7" stroke="#a2f55f" stroke-width="2.5"/><path d="M0.8 14.3 L5.6 14.3 L0.8 9.5 Z" fill="#82d4fa"/><path d="M2.48 12.620000000000001 L6.4 9.1" stroke="#82d4fa" stroke-width="2.5"/><path d="M14.2 14.3 L9.399999999999999 14.3 L14.2 9.5 Z" fill="#fa7240"/><path d="M12.52 12.620000000000001 L8.6 9.1" stroke="#fa7240" stroke-width="2.5"/></g></svg>
<div class="t" style="left:603px;top:380.00px;font-size:12px;line-height:13.40px;color:#c8c8c8;">A</div>
<div class="t" style="left:603px;top:401.00px;font-size:12px;line-height:13.40px;color:#c8c8c8;">B</div>
<div style="left:616px;top:397px;width:15.5px;height:17.6px;background:#2a2a2a;border-radius:3px;border:1px solid #262626;border-top-color:#1c1c1c;box-sizing:border-box;"></div>
<div class="t" style="left:620px;top:401.00px;font-size:12px;line-height:13.40px;color:#d0d0d0;">0</div>
<div style="left:634px;top:397px;width:15.5px;height:17.6px;background:#2a2a2a;border-radius:3px;border:1px solid #262626;border-top-color:#1c1c1c;box-sizing:border-box;"></div>
<div class="t" style="left:638px;top:401.00px;font-size:12px;line-height:13.40px;color:#d0d0d0;">0</div>
<div style="left:652px;top:397px;width:15.5px;height:17.6px;background:#2a2a2a;border-radius:3px;border:1px solid #262626;border-top-color:#1c1c1c;box-sizing:border-box;"></div>
<div class="t" style="left:656px;top:401.00px;font-size:12px;line-height:13.40px;color:#d0d0d0;">0</div>
<div style="left:670px;top:397px;width:15.5px;height:17.6px;background:#2a2a2a;border-radius:3px;border:1px solid #262626;border-top-color:#1c1c1c;box-sizing:border-box;"></div>
<div class="t" style="left:674px;top:401.00px;font-size:12px;line-height:13.40px;color:#d0d0d0;">0</div>
<div style="left:413px;top:404px;width:104px;height:113px;background:#3a3a3a;border-radius:2px;box-shadow:0 1px 9px 3px rgba(0,0,0,0.22);"></div>
<div style="left:413px;top:404px;width:104px;height:50px;background:#3c3c3c;border-radius:2px 2px 0 0;"></div>
<div style="left:413px;top:454px;width:104px;height:1px;background:#242424;"></div>
<div style="left:413px;top:505px;width:104px;height:1px;background:#242424;"></div>
<svg style="position:absolute;left:422px;top:417px;" width="24" height="24" viewBox="0 0 24 24"><path d="M12 2 V22 M2 12 H22" stroke="#eeeeee" stroke-width="4" stroke-linecap="round"/></svg>
<div class="t" style="left:456px;top:415.00px;font-size:12px;line-height:13.40px;color:#dcdcdc;letter-spacing:0.300px;">Add</div>
<div class="t" style="left:455px;top:432.00px;font-size:12px;line-height:13.40px;color:#dcdcdc;letter-spacing:0.590px;">Inputs</div>
<div style="left:495px;top:430px;width:15.5px;height:17.5px;background:#2a2a2a;border-radius:3px;border:1px solid #262626;border-top-color:#1c1c1c;box-sizing:border-box;"></div>
<div class="t" style="left:499px;top:434.00px;font-size:12px;line-height:13.40px;color:#d0d0d0;">2</div>
<svg style="position:absolute;left:397px;top:464px;" width="12" height="12" viewBox="0 0 12 12"><circle cx="6.5" cy="6" r="4.1" fill="none" stroke="#c8c8c8" stroke-width="1.1"/></svg>
<svg style="position:absolute;left:397px;top:485px;" width="12" height="12" viewBox="0 0 12 12"><circle cx="6.5" cy="6" r="4.1" fill="none" stroke="#c8c8c8" stroke-width="1.1"/></svg>
<svg style="position:absolute;left:520px;top:464px;" width="12" height="12" viewBox="0 0 12 12"><circle cx="6.5" cy="6" r="4.1" fill="none" stroke="#c8c8c8" stroke-width="1.1"/></svg>
<svg style="position:absolute;left:418px;top:459.5px;overflow:visible" width="17" height="17" viewBox="0 0 17 17"><defs><filter id="f" x="-20%" y="-20%" width="140%" height="140%"><feMorphology operator="dilate" radius="0.6" in="SourceAlpha" result="d"/><feFlood flood-color="#1a1a1a" flood-opacity="0.55"/><feComposite in2="d" operator="in" result="s"/><feMerge><feMergeNode in="s"/><feMergeNode in="SourceGraphic"/></feMerge></filter></defs><g filter="url(#f)"><path d="M4.5 1.3 L8.2 5.3 H6.0 V11.2 H3.0 V5.3 H0.7999999999999998 Z" fill="#a2f55f"/><path d="M14.6 11.7 L11.0 8.299999999999999 V10.2 H4.6 V13.2 H11.0 V15.1 Z" fill="#fa7240"/></g></svg>
<svg style="position:absolute;left:418px;top:480.5px;overflow:visible" width="17" height="17" viewBox="0 0 17 17"><defs><filter id="f" x="-20%" y="-20%" width="140%" height="140%"><feMorphology operator="dilate" radius="0.6" in="SourceAlpha" result="d"/><feFlood flood-color="#1a1a1a" flood-opacity="0.55"/><feComposite in2="d" operator="in" result="s"/><feMerge><feMergeNode in="s"/><feMergeNode in="SourceGraphic"/></feMerge></filter></defs><g filter="url(#f)"><path d="M4.5 1.3 L8.2 5.3 H6.0 V11.2 H3.0 V5.3 H0.7999999999999998 Z" fill="#a2f55f"/><path d="M14.6 11.7 L11.0 8.299999999999999 V10.2 H4.6 V13.2 H11.0 V15.1 Z" fill="#fa7240"/></g></svg>
<svg style="position:absolute;left:496px;top:459.5px;overflow:visible" width="17" height="17" viewBox="0 0 17 17"><defs><filter id="f" x="-20%" y="-20%" width="140%" height="140%"><feMorphology operator="dilate" radius="0.6" in="SourceAlpha" result="d"/><feFlood flood-color="#1a1a1a" flood-opacity="0.55"/><feComposite in2="d" operator="in" result="s"/><feMerge><feMergeNode in="s"/><feMergeNode in="SourceGraphic"/></feMerge></filter></defs><g filter="url(#f)"><path d="M4.5 1.3 L8.2 5.3 H6.0 V11.2 H3.0 V5.3 H0.7999999999999998 Z" fill="#a2f55f"/><path d="M14.6 11.7 L11.0 8.299999999999999 V10.2 H4.6 V13.2 H11.0 V15.1 Z" fill="#fa7240"/></g></svg>
<div class="t" style="left:439px;top:465.00px;font-size:12px;line-height:13.40px;color:#c8c8c8;">A</div>
<div class="t" style="left:439px;top:486.00px;font-size:12px;line-height:13.40px;color:#c8c8c8;">B</div>
<div style="left:452px;top:482px;width:15.5px;height:17.6px;background:#2a2a2a;border-radius:3px;border:1px solid #262626;border-top-color:#1c1c1c;box-sizing:border-box;"></div>
<div class="t" style="left:456px;top:486.00px;font-size:12px;line-height:13.40px;color:#d0d0d0;">0</div>
<div style="left:470px;top:482px;width:15.5px;height:17.6px;background:#2a2a2a;border-radius:3px;border:1px solid #262626;border-top-color:#1c1c1c;box-sizing:border-box;"></div>
<div class="t" style="left:474px;top:486.00px;font-size:12px;line-height:13.40px;color:#d0d0d0;">0</div>
</body></html>
